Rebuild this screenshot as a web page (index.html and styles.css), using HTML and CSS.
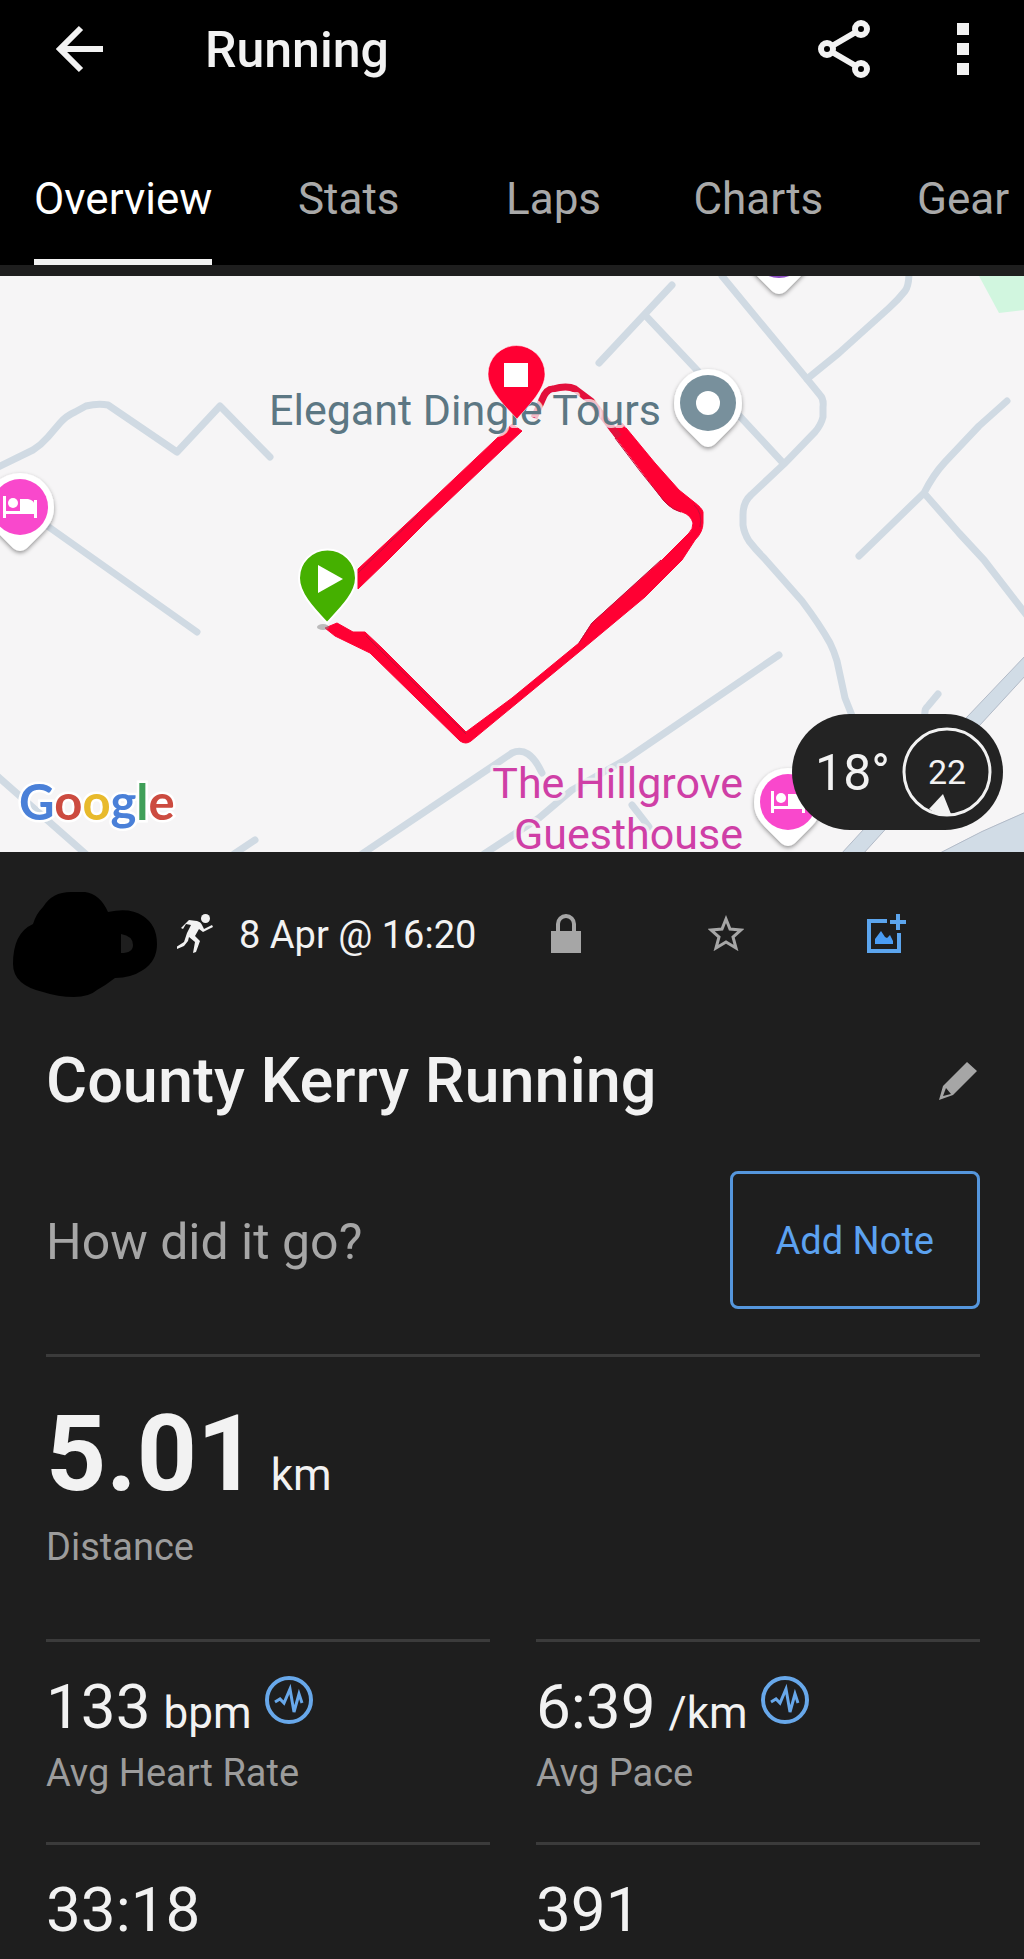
FILE: index.html
```html
<!DOCTYPE html>
<html lang="en">
<head>
<meta charset="utf-8">
<meta name="viewport" content="width=device-width, initial-scale=1">
<title>Running</title>
<link rel="stylesheet" href="styles.css">
</head>
<body>
<header class="topbar">
  <div class="appbar">
    <button class="icon-button" type="button" aria-label="Back">
      <svg width="48" height="48" viewBox="0 0 48 48" fill="none" stroke="#f2f2f2" stroke-width="6"><path d="M47 24H5M25 3 4 24l21 21"/></svg>
    </button>
    <h1 class="appbar-title">Running</h1>
    <button class="icon-button" type="button" aria-label="Share">
      <svg width="54" height="60" viewBox="0 0 54 60" fill="none" stroke="#f2f2f2" stroke-width="6"><circle cx="10" cy="30" r="6"/><circle cx="44" cy="10" r="6"/><circle cx="44" cy="50" r="6"/><path d="M15 27 39 13M15 33l24 14"/></svg>
    </button>
    <button class="icon-button" type="button" aria-label="More options">
      <svg width="12" height="52" viewBox="0 0 12 52" fill="#f2f2f2"><path d="M0 0h12v12H0zM0 20h12v12H0zM0 40h12v12H0z"/></svg>
    </button>
  </div>
  <nav class="tabs">
    <a class="tab tab-active" href="#overview">Overview</a>
    <a class="tab" href="#stats">Stats</a>
    <a class="tab" href="#laps">Laps</a>
    <a class="tab" href="#charts">Charts</a>
    <a class="tab" href="#gear">Gear</a>
  </nav>
</header>

<main id="overview">
  <section class="map" aria-label="Route map">
    <svg class="map-canvas" viewBox="0 0 1024 576">
      <defs>
        <filter id="shadow" x="-20%" y="-20%" width="140%" height="150%"><feDropShadow dx="0" dy="2" stdDeviation="2" flood-color="#000" flood-opacity=".4"/></filter>
        <path id="poi" d="M0-34a34 34 0 0 1 34 34c0 14-7 21-15 29L7 41q-7 6-14 0L-19 29C-27 21-34 14-34 0A34 34 0 0 1 0-34z"/>
        <g id="bed" fill="#fff"><path d="M-17-11h3V4h28V-7h3v18h-3V7h-28v4h-3z"/><circle cx="-7" cy="-4" r="5"/><path d="M0-8h8q7 1 7 8v4H0z"/></g>
      </defs>
      <path fill="#d1f6df" d="M979 0l20 37 25-3V0z"/>
      <g class="road">
        <path d="M-4 192 33 174Q41 169 48 161L60 147Q66 140 75 136L86 130Q98 127 108 129L177 176 220 130 270 181"/>
        <path d="M46 249 197 356M-4 499 88 580M234 578l21-14M362 578l125-84 25-17q17-8 30 20"/>
        <path d="M484 578l26-17 29-19 33-28 53-30 154-105M632 529l17 22"/>
        <path d="M599 87 672 9M645 39l50 53 89 96M722 0 807 103l13 16q4 4 3 12v10q-2 8-8 15l-31 32-33 31q-8 7-8 20v10q1 8 6 16 7 9 15 17l38 43q18 24 28 42 4 8 7 18l8 37 10 25"/>
        <path d="M909-4q0 14-4 19-7 9-16 17l-50 45-32 26M1007 125l-28 25-34 36q-12 13-21 31l-65 63M924 217l35 40 25 27 44 57M925 440q-1-7 3-10l10-12"/>
      </g>
      <path class="highway" d="M1026 379 967 441 841 578h22L980 449l46-50zM938 578q44-24 88-42v42z"/>
      <g class="route">
        <path d="M512 148 418 237 358 293v20l30-29 38-38 96-91z"/>
        <path d="M610 154 639 192 664 225q8 9 18 11 9 3 11 11 0 6-4 10L662 284 592 347 579 367 512 422 466 456 382 372 365 356h-12l-16-9-12 5 10 8 35 17 90 88q6 4 11 0l108-89 66-55 37-37 13-20q8-8 8-17v-11q-1-4-9-10l-15-12-24-27-33-40z"/>
        <path class="route-thin" d="M534 142 542 124q4-11 11-11 14-4 22 0l16 12 28 36"/>
      </g>
      <path class="route-edge" d="M615 162 640 195 665 226q8 8 16 10M694 229q9 8 6 22M661 284 592 347 579 367M366 360l16 16 84 82M358 297 418 239"/>
      <ellipse cx="323" cy="351" rx="6" ry="3" fill="#8888" />
      <text class="place place-slate" x="269" y="149">Elegant Dingle Tours</text>
      <text class="place place-pink" x="743" y="522" text-anchor="end">The Hillgrove</text>
      <text class="place place-pink" x="743" y="573" text-anchor="end">Guesthouse</text>
      <path d="M517 143C502 127 488 113 488 98a28 28 0 0 1 57 0c0 15-14 29-28 45z" fill="#ff0033" stroke="#fff8"/>
      <path d="M504 87h24v24h-24z" fill="#fff"/>
      <path d="M327 347C312 331 299 317 299 302a28 28 0 0 1 57 0c0 15-14 29-29 45z" fill="#45b000" stroke="#fff" stroke-width="2"/>
      <path d="M318 289v28l25-14z" fill="#fff"/>
      <g transform="translate(708 127)"><use href="#poi" fill="#fff" filter="url(#shadow)"/><circle r="28" fill="#78909c"/><circle r="12" fill="#fff"/></g>
      <g transform="translate(20 231)"><use href="#poi" fill="#fff" filter="url(#shadow)"/><circle r="28" fill="#f948cc"/><use href="#bed"/></g>
      <g transform="translate(788 526)"><use href="#poi" fill="#fff" filter="url(#shadow)"/><circle r="28" fill="#f948cc"/><use href="#bed"/></g>
      <g transform="translate(779 -26)"><use href="#poi" fill="#fff" filter="url(#shadow)"/><circle r="28" fill="#8e4fc4"/></g>
      <text class="google" x="19" y="544"><tspan fill="#4a80d8">G</tspan><tspan fill="#cc4b40">o</tspan><tspan fill="#e8ba2c">o</tspan><tspan fill="#4a80d8">g</tspan><tspan fill="#3f9f58">l</tspan><tspan fill="#cc4b40">e</tspan></text>
    </svg>
    <div class="weather">
      <span class="weather-temp">18°</span>
      <span class="wind">22
        <svg class="wind-ring" viewBox="0 0 90 90"><circle cx="45" cy="45" r="43" fill="none" stroke="#f2f2f2" stroke-width="3"/><path d="M41 67 49 87q-12 2-22-5z" fill="#f2f2f2"/></svg>
      </span>
    </div>
  </section>

  <section class="meta">
    <svg class="avatar" width="160" height="146" viewBox="0 0 160 146"><path d="M33 64Q36 54 43 47 52 32 71 32h14q15 2 23 20 22-5 35 4 14 9 14 28 0 17-14 26-12 8-28 8-9 7-18 12-8 7-23 7-16 0-31-5-30-7-30-28 0-31 20-40zM121 74v19q12 0 12-8 0-9-12-11z"/></svg>
    <svg class="runner" width="36" height="40" viewBox="0 0 36 40" fill="#f2f2f2"><circle cx="28.500" cy="5.500" r="4.500"/><path d="M12 7 20 8q4 1 5 4l2 4 8-4 1 2-10 5-4-3-4 7 5 5-4 11-3 1 2-11-6-5-1 4-4 5-7 3-1-2 8-5 3-9 4-8-5-1-3 5-2-1z"/></svg>
    <time class="meta-date">8 Apr @ 16:20</time>
    <div class="meta-actions">
      <button class="icon-button" type="button" aria-label="Privacy">
        <svg width="30" height="40" viewBox="0 0 30 40"><path d="M0 18h30v22H0z" fill="#a6a6a6"/><path d="M7 19v-8a8 8 0 0 1 16 0v8" fill="none" stroke="#a6a6a6" stroke-width="4"/></svg>
      </button>
      <button class="icon-button" type="button" aria-label="Favourite">
        <svg width="36" height="36" viewBox="0 0 36 36" fill="none" stroke="#a6a6a6" stroke-width="3"><path d="m18 4 4 10 11 1-8 7 3 11-10-6-10 6 3-11-8-7 11-1z"/></svg>
      </button>
      <button class="icon-button" type="button" aria-label="Add photo">
        <svg width="40" height="40" viewBox="0 0 40 40" fill="none" stroke="#5ca5ee" stroke-width="4"><path d="M21 8H3v30h30V20M24 9h16M32 1v16"/><path d="M9 31v-5l6-8 4 6 2 1 3-3 3 6v3z" fill="#4a9df5" stroke="none"/></svg>
      </button>
    </div>
  </section>

  <section class="summary">
    <div class="title-row">
      <h2 class="activity-title">County Kerry Running</h2>
      <button class="icon-button" type="button" aria-label="Edit title">
        <svg width="38" height="38" viewBox="0 0 38 38" fill="#a6a6a6"><path fill-rule="evenodd" d="M28 0l10 9-24 24L0 38 4 24zM7 26 4 34l8-2z"/></svg>
      </button>
    </div>
    <div class="note-row">
      <p class="note-prompt">How did it go?</p>
      <button class="note-button" type="button">Add Note</button>
    </div>
    <div class="distance">
      <p class="reading"><strong class="distance-value">5.01</strong> <span class="unit">km</span></p>
      <p class="label">Distance</p>
    </div>
    <div class="metrics">
      <div class="metric">
        <div class="reading"><span class="value">133</span> <span class="unit">bpm</span>
          <button class="icon-button chart-button" type="button" aria-label="Heart rate chart"><svg width="48" height="48" viewBox="0 0 48 48" fill="none" stroke="#68a8ea"><circle cx="24" cy="24" r="22" stroke-width="4"/><path d="m10 26 5-3 4 4 6-14 4 23 5-18 3 9" stroke-width="3"/></svg></button>
        </div>
        <p class="label">Avg Heart Rate</p>
      </div>
      <div class="metric">
        <div class="reading"><span class="value">6:39</span> <span class="unit">/km</span>
          <button class="icon-button chart-button" type="button" aria-label="Pace chart"><svg width="48" height="48" viewBox="0 0 48 48" fill="none" stroke="#68a8ea"><circle cx="24" cy="24" r="22" stroke-width="4"/><path d="m10 26 5-3 4 4 6-14 4 23 5-18 3 9" stroke-width="3"/></svg></button>
        </div>
        <p class="label">Avg Pace</p>
      </div>
      <div class="metric metric-last"><div class="reading"><span class="value">33:18</span></div></div>
      <div class="metric metric-last"><div class="reading"><span class="value">391</span></div></div>
    </div>
  </section>
</main>
</body>
</html>
```
FILE: styles.css
```css
* { box-sizing: border-box; }

body {
  margin: 0;
  background: #1e1e1e;
  color: #f2f2f2;
  font-family: Roboto, "Liberation Sans", sans-serif;
  font-size: 38px;
  line-height: 44px;
}

h1, h2, p { margin: 0; }
svg { display: block; flex: none; }

.icon-button {
  display: grid;
  place-items: center;
  padding: 0;
  border: 0;
  background: none;
  cursor: pointer;
}

/* Header */
.topbar { background: #000; }

.appbar {
  display: flex;
  align-items: center;
  height: 98px;
  padding: 0 55px 0 56px;
}

.appbar-title {
  flex: 1;
  padding: 2px 0 0 101px;
  font-size: 50px;
  font-weight: 500;
  line-height: 60px;
}

.appbar .icon-button + .icon-button { margin-left: 86px; }

.tabs {
  display: flex;
  padding-top: 76px;
  overflow: hidden;
}

.tab {
  flex: none;
  min-width: 20%;
  color: #a9a9a9;
  font-size: 44px;
  line-height: 50px;
  text-align: center;
  text-decoration: none;
}

.tab-active {
  margin: 0 34px;
  min-width: 0;
  padding-bottom: 35px;
  border-bottom: 6px solid #f2f2f2;
  color: #fff;
}

/* Map */
.map {
  position: relative;
  margin-top: 11px;
  background: #f6f5f6;
}

.map-canvas { width: 100%; height: auto; }

.road {
  fill: none;
  stroke: #d0dae3;
  stroke-width: 7;
  stroke-linecap: round;
  stroke-linejoin: round;
}

.highway { fill: #d1dce6; stroke: #b2bac7; stroke-width: 1; }
.route { fill: #ff0033; stroke: #ff0033; stroke-width: 1; stroke-linejoin: round; }
.route-thin { fill: none; stroke: #e3103c; stroke-width: 7; }
.route-edge { fill: none; stroke: #c00f3a; stroke-width: 1; }

.place {
  font-size: 43px;
  stroke: #f6f5f6;
  stroke-width: 6;
  stroke-opacity: .75;
  stroke-linejoin: round;
  paint-order: stroke;
}

.place-slate { fill: #5c7783; }
.place-pink { fill: #cf3fa6; }

.google {
  font-family: Lato, sans-serif;
  font-size: 49px;
  font-weight: 700;
  stroke: #fff;
  stroke-width: 5;
  paint-order: stroke;
}

.weather {
  position: absolute;
  right: 21px;
  bottom: 22px;
  display: flex;
  align-items: center;
  gap: 12px;
  height: 116px;
  padding: 0 11px 0 23px;
  border-radius: 58px;
  background: #232323;
}

.weather-temp { padding-top: 2px; font-size: 50px; line-height: 60px; }

.wind {
  position: relative;
  display: grid;
  place-items: center;
  width: 90px;
  height: 90px;
  font-size: 34px;
}

.wind-ring { position: absolute; inset: 0; }

/* Activity meta */
.meta {
  display: flex;
  align-items: center;
  height: 162px;
  padding-right: 58px;
}

.runner { margin: 0 26px 0 17px; }
.meta-date { padding-top: 3px; white-space: nowrap; }

.meta-actions {
  flex: 1;
  display: grid;
  grid-template-columns: repeat(3, 1fr);
  margin-left: 10px;
}

/* Summary */
.summary { padding: 0 44px 0 46px; }

.title-row {
  display: flex;
  align-items: center;
  justify-content: space-between;
  height: 134px;
  padding-right: 3px;
}

.activity-title { font-size: 63px; font-weight: 500; line-height: 72px; }

.note-row {
  display: flex;
  align-items: center;
  justify-content: space-between;
  padding: 23px 0 45px;
}

.note-prompt { padding-top: 4px; color: #a6a6a6; font-size: 50px; line-height: 60px; }

.note-button {
  padding: 45px 43px 43px;
  border: 3px solid #5596dc;
  border-radius: 8px;
  background: none;
  color: #5ca2f0;
  font: inherit;
  cursor: pointer;
}

.distance {
  padding: 42px 0 70px;
  border-top: 3px solid #3b3b3b;
}

.reading { white-space: nowrap; }
.distance-value { margin-right: 4px; font-size: 105px; font-weight: 700; line-height: 112px; }
.distance .label { margin-top: 14px; }
.unit { font-size: 44px; }
.label { color: #9c9c9c; }

.metrics {
  display: grid;
  grid-template-columns: 1fr 1fr;
  column-gap: 46px;
}

.metric {
  padding: 29px 0 47px;
  border-top: 3px solid #3b3b3b;
}

.metric .reading {
  display: flex;
  align-items: baseline;
  gap: 13px;
  height: 72px;
}

.metric .label { margin-top: 8px; }
.metric-last { padding-bottom: 8px; }
.value { font-size: 62px; line-height: 72px; }
.chart-button { align-self: flex-start; padding-top: 5px; }
```
